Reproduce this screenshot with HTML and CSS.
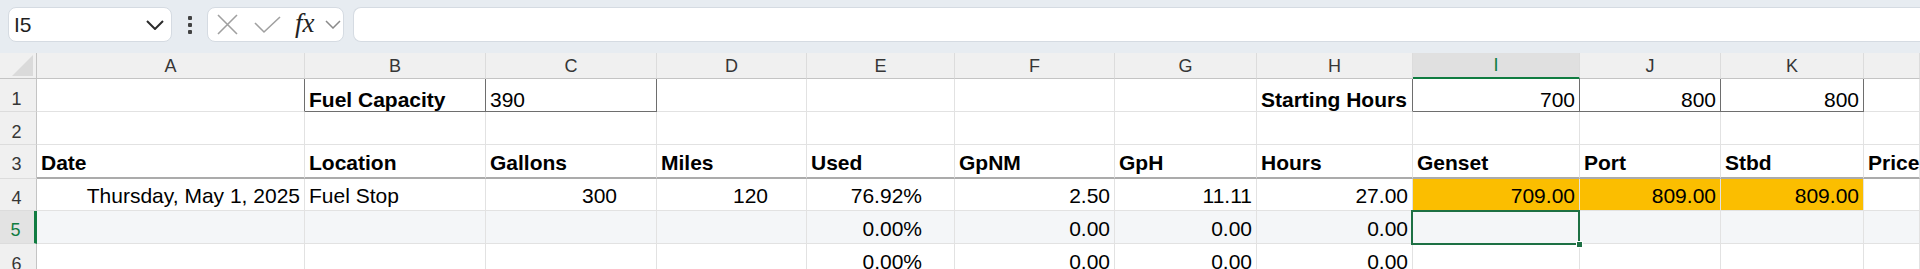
FILE: index.html
```html
<!DOCTYPE html>
<html>
<head>
<meta charset="utf-8">
<link rel="stylesheet" href="styles.css">
</head>
<body>
<div class="toolbar">
  <div class="namebox">
    <span class="nb-text">I5</span>
    <svg class="nb-chev" width="18" height="10" viewBox="0 0 18 10"><polyline points="1,1 9,9 17,1" fill="none" stroke="#2b2b2b" stroke-width="2"/></svg>
  </div>
  <div class="dots"><i></i><i></i><i></i></div>
  <div class="fxbox">
    <svg class="ic-x" width="21" height="21" viewBox="0 0 21 21"><path d="M1 1 L20 20 M20 1 L1 20" stroke="#a0a0a0" stroke-width="1.6" fill="none"/></svg>
    <svg class="ic-ok" width="27" height="18" viewBox="0 0 27 18"><polyline points="1,7 10,16 26,1" fill="none" stroke="#a0a0a0" stroke-width="1.6"/></svg>
    <span class="fx">fx</span>
    <svg class="ic-chev" width="16" height="9" viewBox="0 0 16 9"><polyline points="1,1 8,8 15,1" fill="none" stroke="#8a8a8a" stroke-width="1.5"/></svg>
  </div>
  <div class="formula"></div>
</div>
<div class="sheet">
  <!-- header row -->
  <div class="corner"><span class="tri"></span></div>
  <div class="ch">A</div><div class="ch">B</div><div class="ch">C</div><div class="ch">D</div><div class="ch">E</div><div class="ch">F</div><div class="ch">G</div><div class="ch">H</div><div class="ch ch-sel">I</div><div class="ch">J</div><div class="ch">K</div><div class="ch"></div>
  <!-- row 1 -->
  <div class="rh">1</div>
  <div class="c br-dk"></div>
  <div class="c b bb-dk br-dk">Fuel Capacity</div>
  <div class="c bb-dk br-dk">390</div>
  <div class="c"></div><div class="c"></div><div class="c"></div><div class="c"></div>
  <div class="c b br-dk">Starting Hours</div>
  <div class="c n bb-dk br-dk">700</div>
  <div class="c n bb-dk br-dk">800</div>
  <div class="c n bb-dk br-dk">800</div>
  <div class="c"></div>
  <!-- row 2 -->
  <div class="rh">2</div>
  <div class="c"></div><div class="c"></div><div class="c"></div><div class="c"></div><div class="c"></div><div class="c"></div><div class="c"></div><div class="c"></div><div class="c"></div><div class="c"></div><div class="c"></div><div class="c"></div>
  <!-- row 3 -->
  <div class="rh rh3">3</div>
  <div class="c b hd">Date</div><div class="c b hd">Location</div><div class="c b hd">Gallons</div><div class="c b hd">Miles</div><div class="c b hd">Used</div><div class="c b hd">GpNM</div><div class="c b hd">GpH</div><div class="c b hd">Hours</div><div class="c b hd">Genset</div><div class="c b hd">Port</div><div class="c b hd">Stbd</div><div class="c b hd">Price</div>
  <!-- row 4 -->
  <div class="rh">4</div>
  <div class="c n m">Thursday, May 1, 2025</div>
  <div class="c m">Fuel Stop</div>
  <div class="c n m pc">300</div>
  <div class="c n m pd">120</div>
  <div class="c n m pe">76.92%</div>
  <div class="c n m">2.50</div>
  <div class="c n m">11.11</div>
  <div class="c n m">27.00</div>
  <div class="c n m gold">709.00</div>
  <div class="c n m gold">809.00</div>
  <div class="c n m gold">809.00</div>
  <div class="c m"></div>
  <!-- row 5 -->
  <div class="rh rh-sel">5</div>
  <div class="c m r5"></div><div class="c m r5"></div><div class="c m r5"></div><div class="c m r5"></div>
  <div class="c n m r5 pe">0.00%</div>
  <div class="c n m r5">0.00</div>
  <div class="c n m r5">0.00</div>
  <div class="c n m r5">0.00</div>
  <div class="c m r5 active"><span class="selbox"><span class="handle"></span></span></div>
  <div class="c m r5"></div><div class="c m r5"></div><div class="c m r5"></div>
  <!-- row 6 -->
  <div class="rh">6</div>
  <div class="c m"></div><div class="c m"></div><div class="c m"></div><div class="c m"></div>
  <div class="c n m pe">0.00%</div>
  <div class="c n m">0.00</div>
  <div class="c n m">0.00</div>
  <div class="c n m">0.00</div>
  <div class="c m"></div><div class="c m"></div><div class="c m"></div><div class="c m"></div>
</div>
</body>
</html>
```
FILE: styles.css
```css
* { box-sizing: border-box; }
html, body { margin: 0; padding: 0; }
body {
  width: 1920px;
  height: 269px;
  overflow: hidden;
  background: #e7ecf1;
  font-family: "Liberation Sans", Arial, sans-serif;
  color: #000;
}
.toolbar {
  height: 53px;
  display: flex;
  align-items: flex-start;
  padding: 7px 0 0 8px;
}
.namebox {
  width: 164px;
  height: 35px;
  background: #fff;
  border: 1px solid #d5dbe2;
  border-radius: 8px;
  display: flex;
  align-items: center;
  justify-content: space-between;
  padding: 0 7px 0 5px;
}
.nb-text { font-size: 21px; color: #1f1f1f; }
.nb-chev { display: block; }
.dots {
  width: 35px;
  height: 35px;
  display: flex;
  flex-direction: column;
  align-items: center;
  justify-content: center;
  gap: 3px;
}
.dots i { display: block; width: 4px; height: 4px; border-radius: 1px; background: #424242; }
.fxbox {
  width: 137px;
  height: 35px;
  background: #fff;
  border: 1px solid #d5dbe2;
  border-radius: 8px;
  display: flex;
  align-items: center;
  padding: 0 0 0 9px;
}
.ic-x { display: block; margin-right: 16px; }
.ic-ok { display: block; margin-right: 14px; }
.fx {
  font-family: "Liberation Serif", "Times New Roman", serif;
  font-style: italic;
  font-size: 27px;
  color: #222;
  line-height: 1;
  margin-right: 10px;
  margin-top: -2px;
}
.ic-chev { display: block; }
.formula {
  flex: 1;
  height: 35px;
  margin-left: 9px;
  background: #fff;
  border: 1px solid #d5dbe2;
  border-right: none;
  border-radius: 8px 0 0 8px;
}
.sheet {
  display: grid;
  grid-template-columns: 37px 268px 181px 171px 150px 148px 160px 142px 156px 167px 141px 143px 56px;
  grid-template-rows: 26px 33px 33px 34px 32px 33px 33px;
  background: #fff;
}
.corner {
  background: #f0f0f0;
  border-right: 1px solid #c4c4c4;
  border-bottom: 1px solid #c4c4c4;
  position: relative;
}
.tri {
  position: absolute;
  right: 3px;
  bottom: 2px;
  width: 0;
  height: 0;
  border-left: 21px solid transparent;
  border-bottom: 21px solid #dadada;
}
.ch {
  background: #f0f0f0;
  border-right: 1px solid #dcdcdc;
  border-bottom: 1px solid #c4c4c4;
  font-size: 18px;
  color: #363636;
  display: flex;
  align-items: center;
  justify-content: center;
  padding-top: 1px;
}
.ch-sel {
  background: #e0e0e0;
  color: #107c41;
  border-bottom: 2px solid #107c41;
}
.rh {
  background: #f0f0f0;
  border-right: 1px solid #c4c4c4;
  border-bottom: 1px solid #dcdcdc;
  font-size: 18px;
  color: #363636;
  display: flex;
  align-items: flex-end;
  justify-content: center;
  padding-bottom: 1px;
  padding-right: 3px;
}
.rh3 { padding-bottom: 3px; }
.rh-sel {
  background: #e3e3e3;
  color: #107c41;
  border-right: 3px solid #107c41;
  padding-bottom: 2px;
}
.c {
  border-right: 1px solid #e2e2e2;
  border-bottom: 1px solid #e2e2e2;
  font-size: 21px;
  line-height: 22px;
  white-space: nowrap;
  overflow: visible;
  display: flex;
  align-items: flex-end;
  padding: 0 4px 0 4px;
  position: relative;
}
.c.b { font-weight: bold; }
.c.n { justify-content: flex-end; }
.c.m { padding-bottom: 3px; }
.c.hd { border-bottom: 2px solid #ababab; padding-bottom: 3px; }
.br-dk { border-right-color: #6e6e6e; }
.bb-dk { border-bottom-color: #6e6e6e; }
.pc { padding-right: 39px; }
.pd { padding-right: 38px; }
.pe { padding-right: 32px; }
.gold { background: #fbbe00; }
.r5 { background: #f4f6f8; }
.active { z-index: 2; }
.selbox {
  position: absolute;
  left: -2px;
  top: -1px;
  right: -1px;
  bottom: -2px;
  border: 2px solid #1d7044;
}
.handle {
  position: absolute;
  right: -5px;
  bottom: -5px;
  width: 7px;
  height: 7px;
  background: #1d7044;
  border: 1px solid #fff;
}
```
